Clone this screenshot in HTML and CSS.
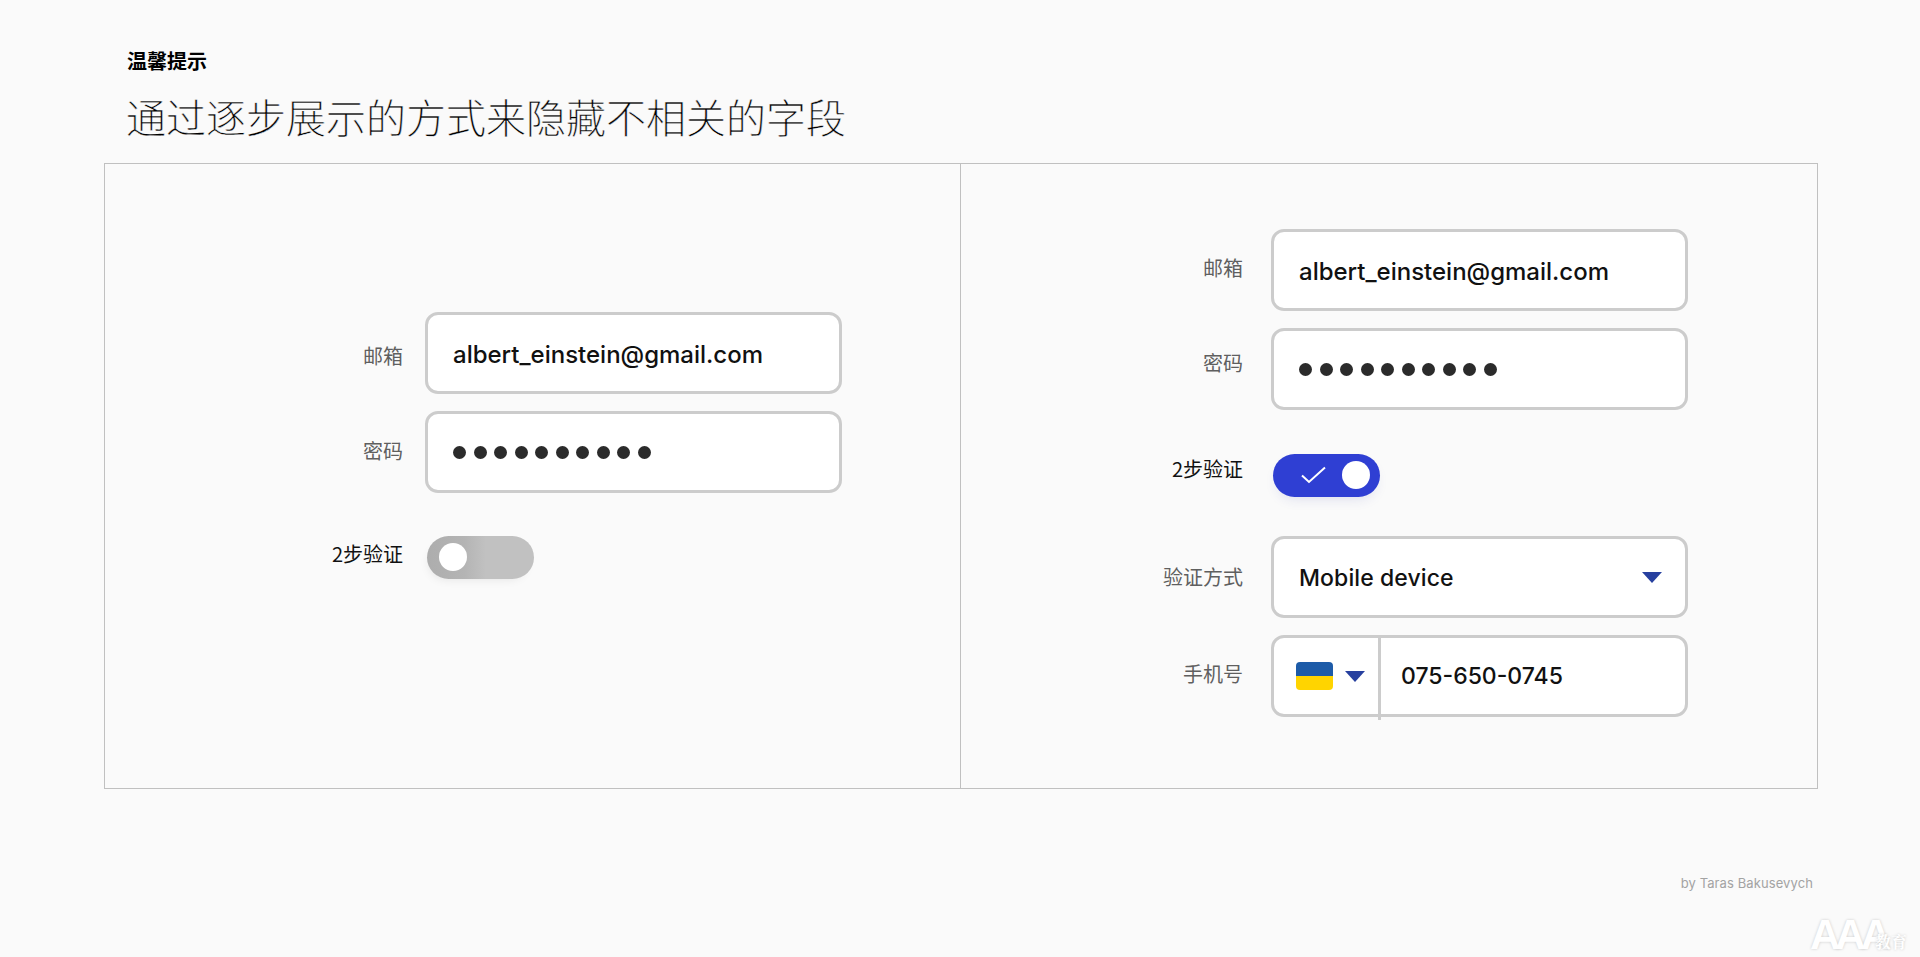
FILE: index.html
```html
<!DOCTYPE html>
<html lang="zh">
<head>
<meta charset="utf-8">
<title>通过逐步展示的方式来隐藏不相关的字段</title>
<link rel="stylesheet" href="styles.css">
</head>
<body>
<div class="page">
  <header class="head">
    <div class="eyebrow">温馨提示</div>
    <h1 class="title">通过逐步展示的方式来隐藏不相关的字段</h1>
  </header>
  <main class="frame">
    <section class="panel panel-left">
      <div class="row">
        <span class="label n-d3">邮箱</span>
        <div class="field"><span class="value lowered">albert_einstein@gmail.com</span></div>
      </div>
      <div class="row">
        <span class="label n-u1">密码</span>
        <div class="field"><div class="dots"><i></i><i></i><i></i><i></i><i></i><i></i><i></i><i></i><i></i><i></i></div></div>
      </div>
      <div class="row row-toggle">
        <span class="label label-strong n-u3">2步验证</span>
        <div class="toggle toggle-off"><span class="knob"></span></div>
      </div>
    </section>
    <section class="panel panel-right">
      <div class="row">
        <span class="label n-u2">邮箱</span>
        <div class="field"><span class="value lowered">albert_einstein@gmail.com</span></div>
      </div>
      <div class="row">
        <span class="label n-u6">密码</span>
        <div class="field"><div class="dots"><i></i><i></i><i></i><i></i><i></i><i></i><i></i><i></i><i></i><i></i></div></div>
      </div>
      <div class="row row-toggle">
        <span class="label label-strong n-u6">2步验证</span>
        <div class="toggle toggle-on">
          <svg class="check" width="26" height="18" viewBox="0 0 26 18"><path d="M2 9.500l7 6.500L25 1.500" fill="none" stroke="#fff" stroke-width="2"/></svg>
          <span class="knob"></span>
        </div>
      </div>
      <div class="row">
        <span class="label">验证方式</span>
        <div class="field field-select">
          <span class="value value-wide lowered">Mobile device</span>
          <span class="caret"></span>
        </div>
      </div>
      <div class="row">
        <span class="label n-u2">手机号</span>
        <div class="field field-phone">
          <div class="country">
            <span class="flag"></span>
            <span class="caret"></span>
          </div>
          <span class="value phone">075-650-0745</span>
        </div>
      </div>
    </section>
  </main>
  <footer class="credit">by Taras Bakusevych</footer>
  <div class="watermark"><span class="wm-a">AAA</span><span class="wm-b">教育</span></div>
</div>
</body>
</html>
```

FILE: styles.css
```css
* { box-sizing: border-box; }
html, body { margin: 0; height: 100%; }
body {
  background: #fafafa;
  color: #111;
  font-family: Inter, "Noto Sans CJK SC", sans-serif;
  overflow: hidden;
}
.page { position: relative; height: 957px; padding: 49px 102px 0 104px; }
.head { padding-left: 23px; height: 114px; }
.eyebrow {
  font: 700 20px/24px "Noto Sans CJK SC", sans-serif;
  color: #000;
}
.title {
  margin: 18px 0 0 -1px;
  font: 300 40px/50px "Noto Sans CJK SC", sans-serif;
  color: #000;
  -webkit-text-stroke: 0.4px #fafafa;
}
.frame {
  display: grid;
  grid-template-columns: 856px 1fr;
  height: 626px;
  border: 1px solid #c0c0c0;
}
.panel { display: flex; flex-direction: column; }
.panel-left { border-right: 1px solid #c0c0c0; padding: 148px 0 0 203px; --label-w: 95px; --label-gap: 22px; }
.panel-right { padding: 65px 0 0 195px; --label-w: 87px; --label-gap: 28px; }
.row { display: flex; align-items: center; height: 82px; margin-bottom: 17px; }
.row-toggle { height: 42px; margin: 27px 0 40px; }
.panel-left .row-toggle { margin-top: 26px; }
.label {
  width: var(--label-w);
  margin-right: var(--label-gap);
  text-align: right;
  font: 400 20px/28px "Noto Sans CJK SC", sans-serif;
  color: #5f5f5f;
  flex: none;
}
.label-strong { color: #111; }
.n-d3 { margin-top: 6px; }
.n-u1 { margin-bottom: 2px; }
.n-u2 { margin-bottom: 4px; }
.n-u3 { margin-bottom: 6px; }
.n-u6 { margin-bottom: 12px; }
.field {
  display: flex;
  align-items: center;
  width: 417px;
  height: 82px;
  padding: 0 25px;
  background: #fff;
  border: 3px solid #cccccc;
  border-radius: 13px;
}
.value { font-size: 24px; font-weight: 500; color: #111; }
.value-wide { font-size: 23px; letter-spacing: .1px; }
.lowered { padding-top: 2px; }
.dots { display: flex; gap: 7.500px; }
.dots i { width: 13px; height: 13px; border-radius: 50%; background: #2b2b2b; }
.toggle {
  display: flex;
  align-items: center;
  width: 107px;
  height: 43px;
  margin-left: 2px;
  border-radius: 22px;
  position: relative;
}
.knob { width: 28px; height: 28px; border-radius: 50%; background: #fff; }
.toggle-off {
  padding-left: 12px;
  background: linear-gradient(90deg, #adadad 0%, #b4b4b4 35%, #c1c1c1 55%, #c1c1c1 100%);
  box-shadow: -3px 5px 12px -7px rgba(0,0,0,.14);
}
.toggle-on {
  justify-content: flex-end;
  padding-right: 10px;
  background: #2f3fd3;
  box-shadow: 0 6px 14px -6px rgba(40,50,160,.18);
}
.check { position: absolute; left: 27px; top: 12px; }
.field-select { justify-content: space-between; padding-right: 23px; }
.caret {
  flex: none;
  width: 0; height: 0;
  border-left: 10px solid transparent;
  border-right: 10px solid transparent;
  border-top: 11px solid #27409f;
}
.field-phone { padding: 0 26px 0 0; }
.country {
  display: flex;
  align-items: center;
  gap: 12px;
  width: 107px;
  height: 76px;
  padding-left: 22px;
  position: relative;
  flex: none;
}
.country::after {
  content: "";
  position: absolute;
  right: 0;
  top: 0;
  bottom: -6px;
  width: 3px;
  background: #cccccc;
}
.flag {
  flex: none;
  width: 37px;
  height: 28px;
  border-radius: 4px;
  background: linear-gradient(#1d5ba8 0 50%, #ffd400 50% 100%);
}
.phone { font-size: 23px; margin-left: 20px; }
.credit {
  position: absolute;
  right: 107px;
  top: 873px;
  font: 400 13px/20px Inter, sans-serif;
  color: #a3a3a3;
  letter-spacing: .1px;
}
.watermark {
  position: absolute;
  left: 1810px;
  top: 918px;
  display: flex;
  align-items: flex-end;
  gap: 4px;
  color: #fff;
  text-shadow: 0 0 3px rgba(0,0,0,.2);
}
.wm-a { font: 700 42px/34px "Liberation Sans Narrow", "Liberation Sans", sans-serif; letter-spacing: -5px; width: 61px; }
.wm-b { font: 700 16px/20px "Noto Serif CJK SC", "Noto Sans CJK SC", serif; }
```
